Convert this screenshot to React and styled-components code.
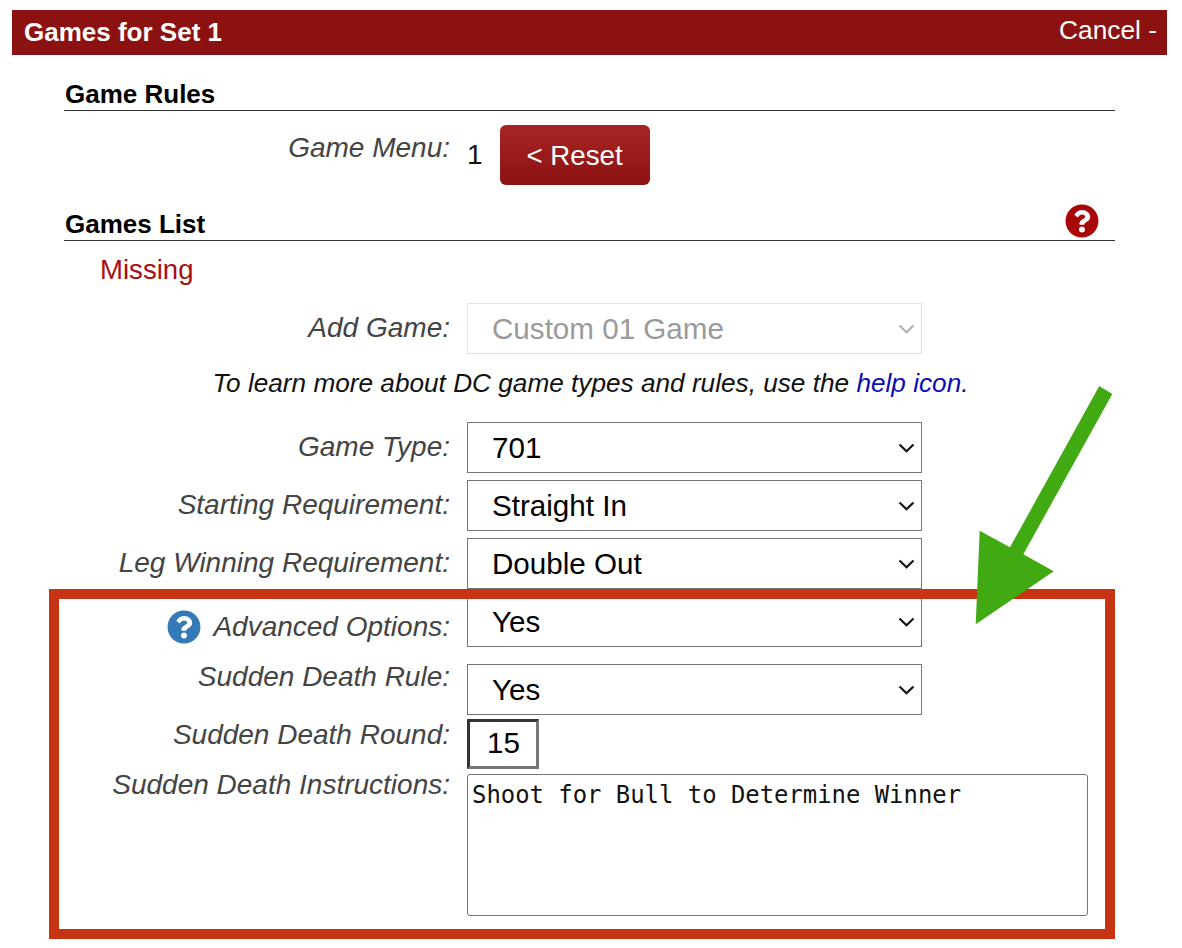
import React from "react";
import styled, { createGlobalStyle } from "styled-components";
import { FaQuestionCircle } from "react-icons/fa";

const Global = createGlobalStyle`
  html, body { margin: 0; padding: 0; background: #fff; }
  body { font-family: "Liberation Sans", Arial, sans-serif; }
`;

const Page = styled.div`
  position: relative;
  width: 1182px;
  height: 948px;
  overflow: hidden;
  padding-top: 10px;
  box-sizing: border-box;
`;

const Header = styled.header`
  display: flex;
  justify-content: space-between;
  margin: 0 15px 0 12px;
  height: 45px;
  padding: 0 10px 0 12px;
  background: #8c1212;
  color: #fff;
  box-sizing: border-box;
`;

const HeaderTitle = styled.h1`
  margin: 0;
  font-size: 26px;
  font-weight: 700;
  line-height: 45px;
`;

const HeaderAction = styled.a`
  font-size: 26.3px;
  line-height: 40px;
`;

const Content = styled.main`
  margin: 0 67px 0 64px;
`;

const SectionHead = styled.div`
  display: flex;
  justify-content: space-between;
  align-items: flex-end;
  height: ${(p) => p.$height}px;
  border-bottom: 1px solid #333;
`;

const SectionTitle = styled.h2`
  margin: 0;
  font-size: 26px;
  font-weight: 700;
  line-height: 30px;
  color: #000;
  padding: 0 0 1px 1px;
`;

const HelpIcon = styled(FaQuestionCircle)`
  display: block;
  width: ${(p) => p.$size}px;
  height: ${(p) => p.$size}px;
  color: ${(p) => p.$color};
  flex: none;
`;

const HeadHelp = styled.span`
  margin: 0 16px 2px 0;
`;

const Row = styled.div`
  display: grid;
  grid-template-columns: 386px 1fr;
  column-gap: 17px;
  margin-top: ${(p) => p.$top || 0}px;
`;

const Label = styled.label`
  display: flex;
  justify-content: flex-end;
  align-items: center;
  gap: 12px;
  height: 30px;
  margin-top: ${(p) => p.$offset || 0}px;
  font-size: 28px;
  font-style: italic;
  color: #444;
  white-space: nowrap;
`;

const Value = styled.div`
  display: flex;
  align-items: center;
  gap: 17px;
  font-size: 28px;
  color: #111;
`;

const ResetButton = styled.button`
  width: 150px;
  height: 60px;
  border: 0;
  border-radius: 6px;
  background: linear-gradient(#a82424, #8c1212);
  color: #fff;
  font: 27.7px "Liberation Sans", Arial, sans-serif;
  padding: 2px 0 0;
`;

const Missing = styled.div`
  margin: 12px 0 0 36px;
  height: 35px;
  line-height: 34px;
  font-size: 27.6px;
  color: #a80f0f;
`;

const SelectWrap = styled.div`
  position: relative;
  width: 455px;
  height: 51px;
`;

const Select = styled.select`
  display: block;
  appearance: none;
  width: 100%;
  height: 100%;
  box-sizing: border-box;
  padding: 0 40px 0 24px;
  font: 29.6px "Liberation Sans", Arial, sans-serif;
  color: ${(p) => (p.disabled ? "#9a9a9a" : "#000")};
  background: #fff;
  border: 1px solid ${(p) => (p.disabled ? "#e2e2e2" : "#767676")};
  border-radius: 0;
  opacity: 1;
`;

const Chevron = styled.svg`
  position: absolute;
  left: 431px;
  top: 21px;
  pointer-events: none;
`;

const Note = styled.p`
  margin: 14px 0 0;
  height: 30px;
  line-height: 30px;
  font-size: 26.2px;
  font-style: italic;
  color: #111;
  text-align: center;
  padding-left: 2px;
`;

const NoteLink = styled.a`
  color: #0d0db4;
`;

const NumberInput = styled.input`
  width: 72px;
  height: 50px;
  box-sizing: border-box;
  border: 3px solid;
  border-color: #333 #777 #777 #333;
  padding: 0 0 2px 1px;
  text-align: center;
  font: 29.6px "Liberation Sans", Arial, sans-serif;
  color: #000;
  outline: none;
`;

const TextArea = styled.textarea`
  display: block;
  width: 621px;
  height: 142px;
  box-sizing: border-box;
  border: 1px solid #767676;
  border-radius: 3px;
  padding: 6px 4px;
  font: 23.9px "DejaVu Sans Mono", monospace;
  color: #111;
  resize: none;
`;

const Highlight = styled.div`
  position: absolute;
  left: 49px;
  top: 589px;
  width: 1066px;
  height: 350px;
  box-sizing: border-box;
  border: 10px solid #c63414;
  pointer-events: none;
`;

const Arrow = styled.svg`
  position: absolute;
  left: 0;
  top: 0;
  pointer-events: none;
`;

function Dropdown({ value, disabled }) {
  return (
    <SelectWrap>
      <Select disabled={disabled} defaultValue={value}>
        <option>{value}</option>
      </Select>
      <Chevron width="17" height="10" viewBox="0 0 17 10" fill="none">
        <path
          d="M1.5 1.5 L8.5 8.2 L15.5 1.5"
          stroke={disabled ? "#b0b0b0" : "#111"}
          strokeWidth="2.2"
        />
      </Chevron>
    </SelectWrap>
  );
}

export default function App() {
  return (
    <Page>
      <Global />
      <Header>
        <HeaderTitle>Games for Set 1</HeaderTitle>
        <HeaderAction>Cancel -</HeaderAction>
      </Header>
      <Content>
        <SectionHead $height={55}>
          <SectionTitle>Game Rules</SectionTitle>
        </SectionHead>
        <Row $top={14}>
          <Label $offset={8}>Game Menu:</Label>
          <Value>
            1
            <ResetButton>&lt; Reset</ResetButton>
          </Value>
        </Row>
        <SectionHead $height={55}>
          <SectionTitle>Games List</SectionTitle>
          <HeadHelp>
            <HelpIcon $size={34} $color="#a80808" />
          </HeadHelp>
        </SectionHead>
        <Missing>Missing</Missing>
        <Row $top={15}>
          <Label $offset={10}>Add Game:</Label>
          <Dropdown disabled value="Custom 01 Game" />
        </Row>
        <Note>
          To learn more about DC game types and rules, use the <NoteLink>help icon.</NoteLink>
        </Note>
        <Row $top={24}>
          <Label $offset={10}>Game Type:</Label>
          <Dropdown value="701" />
        </Row>
        <Row $top={7}>
          <Label $offset={10}>Starting Requirement:</Label>
          <Dropdown value="Straight In" />
        </Row>
        <Row $top={7}>
          <Label $offset={10}>Leg Winning Requirement:</Label>
          <Dropdown value="Double Out" />
        </Row>
        <Row $top={7}>
          <Label $offset={16}>
            <HelpIcon $size={34} $color="#337ab7" />
            Advanced Options:
          </Label>
          <Dropdown value="Yes" />
        </Row>
        <Row $top={17}>
          <Label $offset={-2}>Sudden Death Rule:</Label>
          <Dropdown value="Yes" />
        </Row>
        <Row $top={4}>
          <Label $offset={1}>Sudden Death Round:</Label>
          <NumberInput defaultValue="15" />
        </Row>
        <Row $top={5}>
          <Label $offset={-4}>Sudden Death Instructions:</Label>
          <TextArea defaultValue="Shoot for Bull to Determine Winner" />
        </Row>
      </Content>
      <Highlight />
      <Arrow width="1182" height="948" viewBox="0 0 1182 948">
        <polygon
          fill="#41a912"
          points="1099.3,386 1112.3,394 1023.3,554.3 1053.7,571.3 975.7,624.3 979.7,530.7 1010,547.3"
        />
      </Arrow>
    </Page>
  );
}
